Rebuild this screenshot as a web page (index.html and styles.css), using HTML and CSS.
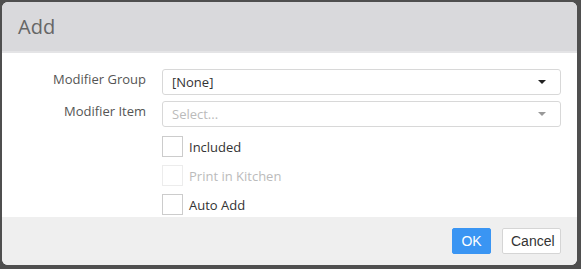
FILE: index.html
```html
<!DOCTYPE html>
<html>
<head>
<meta charset="utf-8">
<link rel="stylesheet" href="styles.css">
</head>
<body>
<div class="dialog">
  <div class="header"><span class="title">Add</span></div>
  <div class="content">
    <div class="form">
      <label class="label">Modifier Group</label>
      <div class="select"><span class="value">[None]</span><span class="caret"></span></div>
      <label class="label">Modifier Item</label>
      <div class="select disabled"><span class="value placeholder">Select...</span><span class="caret"></span></div>
      <div></div>
      <div class="checks">
        <div class="check"><span class="box"></span><span class="ctext">Included</span></div>
        <div class="check disabled"><span class="box"></span><span class="ctext">Print in Kitchen</span></div>
        <div class="check"><span class="box"></span><span class="ctext">Auto Add</span></div>
      </div>
    </div>
  </div>
  <div class="footer">
    <button class="btn primary">OK</button>
    <button class="btn">Cancel</button>
  </div>
</div>
</body>
</html>
```
FILE: styles.css
```css
html, body {
  margin: 0;
  padding: 0;
  height: 100%;
}
* {
  box-sizing: border-box;
}
body {
  background: #4f4f4f;
  font-family: "Open Sans", "Noto Sans", sans-serif;
  font-size: 13px;
  color: #555;
  padding: 2px 4px 4px 2px;
}
.dialog {
  width: 575px;
  height: 263px;
  background: #fff;
  border-radius: 6px;
  overflow: hidden;
  display: flex;
  flex-direction: column;
}
.header {
  height: 51px;
  flex: none;
  background: #d9d9dc;
  border-bottom: 2px solid #e4e4e6;
  display: flex;
  align-items: center;
  padding-left: 16px;
}
.title {
  font-size: 20px;
  color: #666;
  font-family: "Open Sans", sans-serif;
}
.content {
  flex: 1;
  padding: 16px 16px 0 0;
}
.form {
  display: grid;
  grid-template-columns: 144px 1fr;
  column-gap: 16px;
  row-gap: 6px;
}
.label {
  text-align: right;
  color: #555;
  padding-top: 1px;
  line-height: 18px;
}
.select {
  height: 26px;
  border: 1px solid #d8d8d8;
  border-radius: 3px;
  display: flex;
  align-items: center;
  padding: 0 14px 0 9px;
  color: #333;
}
.select .value {
  flex: 1;
}
.select .placeholder {
  color: #bbb;
}
.caret {
  width: 0;
  height: 0;
  border-left: 4px solid transparent;
  border-right: 4px solid transparent;
  border-top: 4px solid #222;
}
.select.disabled .caret {
  border-top-color: #999;
}
.checks {
  display: flex;
  flex-direction: column;
  gap: 8px;
  padding-top: 3px;
}
.check {
  display: flex;
  align-items: center;
  gap: 6px;
  height: 21px;
  color: #333;
}
.box {
  width: 21px;
  height: 21px;
  border: 1px solid #ccc;
  background: #fff;
}
.check.disabled .box {
  border-color: #ececec;
}
.check.disabled .ctext {
  color: #bbb;
}
.footer {
  height: 48px;
  flex: none;
  background: #efefef;
  display: flex;
  justify-content: flex-end;
  align-items: center;
  gap: 11px;
  padding-right: 16px;
}
.btn {
  height: 26px;
  font-family: "Liberation Sans", Arial, sans-serif;
  font-size: 14px;
  border: 1px solid #d5d5d5;
  background: #fff;
  color: #333;
  border-radius: 2px;
  padding: 0 8px;
  width: 59px;
}
.btn.primary {
  background: #3a95f3;
  border-color: #3a95f3;
  color: #fff;
  width: 39px;
  padding: 0;
}
```
